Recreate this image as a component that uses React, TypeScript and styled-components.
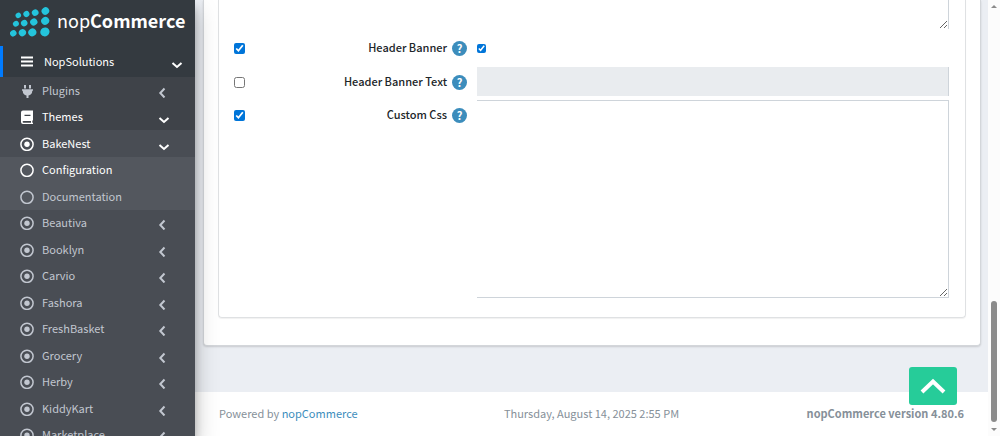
import React from "react";
import styled, { createGlobalStyle, css } from "styled-components";

const GlobalStyle = createGlobalStyle`
  * { box-sizing: border-box; }
  html, body { margin: 0; height: 100%; overflow: hidden; }
  #root { height: 100%; }
  body {
    font-family: "Noto Sans CJK SC", "Open Sans", sans-serif;
    font-size: 11px;
    line-height: 18px;
    color: #212529;
    background: #ebeef3;
  }
`;

const Page = styled.div`
  display: flex;
  height: 100vh;
  overflow: hidden;
`;

const Sidebar = styled.aside`
  position: relative;
  z-index: 2;
  flex: none;
  width: 195px;
  background: #343a40;
  box-shadow: 0 11px 22px rgba(0, 0, 0, 0.25), 0 8px 8px rgba(0, 0, 0, 0.22);
`;

const SidebarClip = styled.div`
  height: 100%;
  overflow: hidden;
`;

const Brand = styled.a`
  display: flex;
  align-items: flex-start;
  height: 46px;
  padding: 7px 0 0 10px;
  gap: 7px;
  color: #fff;
  text-decoration: none;
  font-size: 18px;
  line-height: 26px;
  b { font-weight: 700; }
`;

const List = styled.ul<{ $bg?: string }>`
  margin: 0;
  padding: 0;
  list-style: none;
  background: ${(p) => p.$bg ?? "transparent"};
`;

const RowLink = styled.a<{ $active?: boolean; $top?: boolean; $tall?: boolean }>`
  display: flex;
  align-items: center;
  height: ${(p) => (p.$tall ? 27 : 26)}px;
  padding: 0 24px 0 20px;
  color: ${(p) => (p.$active ? "#fff" : "#c2c7d0")};
  text-decoration: none;
  white-space: nowrap;
  svg { flex: none; }
  span { flex: 1; padding: 0 0 2px 8px; }
  ${(p) =>
    p.$top &&
    css`
      height: 31px;
      padding: 0 11px 0 17px;
      border-left: 3px solid #007bff;
      span { padding-left: 10px; }
    `}
`;

const Main = styled.div`
  flex: 1;
  min-width: 0;
  display: flex;
  flex-direction: column;
  justify-content: space-between;
`;

const Card = styled.section`
  margin: 0 7px 0 8px;
  padding: 0 14px 27px;
  background: #fff;
  border: 1px solid #d3d6da;
  border-top: 0;
  border-radius: 0 0 4px 4px;
  box-shadow: 0 1px 2px rgba(0, 0, 0, 0.15);
`;

const Panel = styled.div`
  padding: 0 16px 19px 15px;
  border: 1px solid #dfe1e3;
  border-top: 0;
  border-radius: 0 0 4px 4px;
  box-shadow: 0 1px 1px rgba(0, 0, 0, 0.06);
`;

const FormRow = styled.div<{ $h: number }>`
  display: grid;
  grid-template-columns: 218px 25px minmax(0, 1fr);
  align-items: start;
  min-height: ${(p) => p.$h}px;
`;

const LabelCell = styled.div`
  display: flex;
  align-items: center;
  justify-content: space-between;
  height: 30px;
  padding-right: 5px;
  label { padding-bottom: 2px; font-weight: 500; }
`;

const HelpCell = styled.div`
  display: flex;
  align-items: center;
  height: 30px;
`;

const Help = styled.button`
  width: 15px;
  height: 15px;
  padding: 0;
  border: 0;
  border-radius: 50%;
  background: #3c8dbc;
  color: #fff;
  font: 700 11px/15px "Noto Sans CJK SC", sans-serif;
`;

const Check = styled.input<{ $small?: boolean }>`
  width: ${(p) => (p.$small ? 9 : 11)}px;
  height: ${(p) => (p.$small ? 9 : 11)}px;
  margin: 0;
  accent-color: #0075d9;
`;

const Field = styled.input`
  display: block;
  width: 100%;
  height: 29px;
  border: 0 solid #ced4da;
  border-right-width: 1px;
  background: #e9ecef;
`;

const Area = styled.textarea<{ $h: number; $cut?: boolean }>`
  display: block;
  width: 100%;
  height: ${(p) => p.$h}px;
  border: solid #ced4da;
  border-width: ${(p) => (p.$cut ? "0 1px 0 0" : "1px 1px 1px 0")};
  background: #fff;
  resize: vertical;
`;

const Footer = styled.footer`
  display: grid;
  grid-template-columns: 1fr auto 1fr;
  height: 44px;
  padding: 12px 24px 0;
  background: #fff;
  color: #869099;
  a { color: #3c8dbc; text-decoration: none; }
  strong { text-align: right; }
`;

const Scroll = styled.div`
  flex: none;
  display: flex;
  flex-direction: column;
  align-items: center;
  justify-content: space-between;
  width: 12px;
  padding: 5px 0 4px;
  background: #fcfcfc;
`;

const Thumb = styled.div`
  width: 6px;
  height: 121px;
  margin: auto 0 6px;
  border-radius: 3px;
  background: #8b8b8b;
`;

const ToTop = styled.button`
  position: fixed;
  right: 43px;
  bottom: 31px;
  z-index: 3;
  display: grid;
  place-items: center;
  width: 48px;
  height: 38px;
  padding: 0;
  border: 0;
  border-radius: 3px;
  background: #26cc99;
`;

const dots: [number, number, number][] = [
  [8.3, 8.3, 2.8], [16.4, 7, 3.1], [25.2, 5.6, 3.4], [35.4, 4, 3.9],
  [5.9, 16.8, 3], [14.2, 16.1, 3.3], [23.8, 15, 3.7], [35.2, 13.8, 4.1],
  [3.3, 26.3, 3.3], [12.4, 25.7, 3.7], [22.3, 25.4, 4.1], [34.9, 24.9, 4.7],
];

const Logo = () => (
  <svg width="40" height="30" viewBox="0 0 40 30" fill="#24c4dc" aria-hidden="true">
    {dots.map(([x, y, r]) => (
      <ellipse key={`${x}-${y}`} cx={x} cy={y} rx={r} ry={r * 0.94} transform={`rotate(-35 ${x} ${y})`} />
    ))}
  </svg>
);

const Chevron = ({ open }: { open?: boolean }) => (
  <svg width="14" height="14" viewBox="0 0 14 14" fill="none" stroke="currentColor" strokeWidth="2" aria-hidden="true">
    <path d={open ? "M2.5 8 L7 12 L11.5 8" : "M7.5 4.5 L3.3 9 L7.5 13.5"} />
  </svg>
);

type IconKind = "bars" | "plug" | "book" | "dot" | "circle";

const Icon = ({ kind }: { kind: IconKind }) => (
  <svg width="14" height="14" viewBox="0 0 14 14" fill="currentColor" aria-hidden="true">
    {kind === "bars" && <path d="M1 1.500h12v2H1zM1 5.500h12v2H1zM1 9.500h12v2H1z" />}
    {kind === "plug" && <path d="M4 1h2v3.500H4zM9 1h2v3.500H9zM2 5.200h11v1.500h-.8v.8c0 2-1.500 3.500-3.700 3.900V14.500h-2v-3.100C4.300 11 2.800 9.500 2.800 7.500v-.8H2z" />}
    {kind === "book" && <path fillRule="evenodd" d="M3 .5H13V10.500H12.300V12.800H13V14H3A2 2 0 0 1 1 12V2.500A2 2 0 0 1 3 .5ZM4.500 4.700V6H10.500V4.700ZM3.500 10.900A.9.9 0 0 0 3.500 12.700H11V10.900Z" />}
    {(kind === "dot" || kind === "circle") && <circle cx="7" cy="7.300" r="6.100" fill="none" stroke="currentColor" strokeWidth="1.500" />}
    {kind === "dot" && <circle cx="7" cy="7.300" r="2.700" />}
  </svg>
);

interface RowProps {
  icon: IconKind;
  text: string;
  active?: boolean;
  tall?: boolean;
  top?: boolean;
  arrow?: "open" | "closed";
}

const Row = ({ icon, text, active, tall, top, arrow }: RowProps) => (
  <RowLink href="#" $active={active} $tall={tall} $top={top}>
    <Icon kind={icon} />
    <span>{text}</span>
    {arrow && <Chevron open={arrow === "open"} />}
  </RowLink>
);

const themes = ["Beautiva", "Booklyn", "Carvio", "Fashora", "FreshBasket", "Grocery", "Herby", "KiddyKart", "Marketplace"];

const Setting = ({ id, text, checked, h, children }: { id: string; text: string; checked?: boolean; h: number; children: React.ReactNode }) => (
  <FormRow $h={h}>
    <LabelCell>
      <Check type="checkbox" defaultChecked={checked} aria-label={`Override ${text}`} />
      <label htmlFor={id}>{text}</label>
    </LabelCell>
    <HelpCell>
      <Help type="button">?</Help>
    </HelpCell>
    {children}
  </FormRow>
);

const TopArea = styled.div`
  padding-left: 243px;
  height: 33px;
`;

export default function App() {
  return (
    <>
      <GlobalStyle />
      <Page>
        <Sidebar>
          <SidebarClip>
            <Brand href="#">
              <Logo />
              <span>nop<b>Commerce</b></span>
            </Brand>
            <Row icon="bars" text="NopSolutions" active top arrow="open" />
            <List $bg="#3f4349">
              <li><Row icon="plug" text="Plugins" tall arrow="closed" /></li>
              <li>
                <Row icon="book" text="Themes" active arrow="open" />
                <List $bg="#494d54">
                  <li>
                    <Row icon="dot" text="BakeNest" active tall arrow="open" />
                    <List $bg="#53575e">
                      <li><Row icon="circle" text="Configuration" active /></li>
                      <li><Row icon="circle" text="Documentation" tall /></li>
                    </List>
                  </li>
                  {themes.map((name, i) => (
                    <li key={name}><Row icon="dot" text={name} tall={i % 2 === 1} arrow="closed" /></li>
                  ))}
                </List>
              </li>
            </List>
          </SidebarClip>
        </Sidebar>
        <Main>
          <Card>
            <Panel>
              <TopArea>
                <Area $h={29} $cut aria-label="Header text" />
              </TopArea>
              <Setting id="banner" text="Header Banner" checked h={34}>
                <HelpCell><Check id="banner" type="checkbox" defaultChecked $small /></HelpCell>
              </Setting>
              <Setting id="banner-text" text="Header Banner Text" h={33}>
                <Field id="banner-text" disabled />
              </Setting>
              <Setting id="css" text="Custom Css" checked h={198}>
                <Area id="css" $h={198} />
              </Setting>
            </Panel>
          </Card>
          <Footer>
            <span>Powered by <a href="#">nopCommerce</a></span>
            <span>Thursday, August 14, 2025 2:55 PM</span>
            <strong>nopCommerce version 4.80.6</strong>
          </Footer>
        </Main>
        <Scroll>
          <svg width="6" height="4" viewBox="0 0 6 4" fill="#8b8b8b"><path d="M0 3L3 0L6 3Z" /></svg>
          <Thumb />
          <svg width="6" height="4" viewBox="0 0 6 4" fill="#8b8b8b"><path d="M0 0L3 3L6 0Z" /></svg>
        </Scroll>
      </Page>
      <ToTop type="button" aria-label="Back to top">
        <svg width="26" height="18" viewBox="0 0 26 18" fill="none" stroke="#fff" strokeWidth="4">
          <path d="M2 15L13 4.500L24 15" />
        </svg>
      </ToTop>
    </>
  );
}
